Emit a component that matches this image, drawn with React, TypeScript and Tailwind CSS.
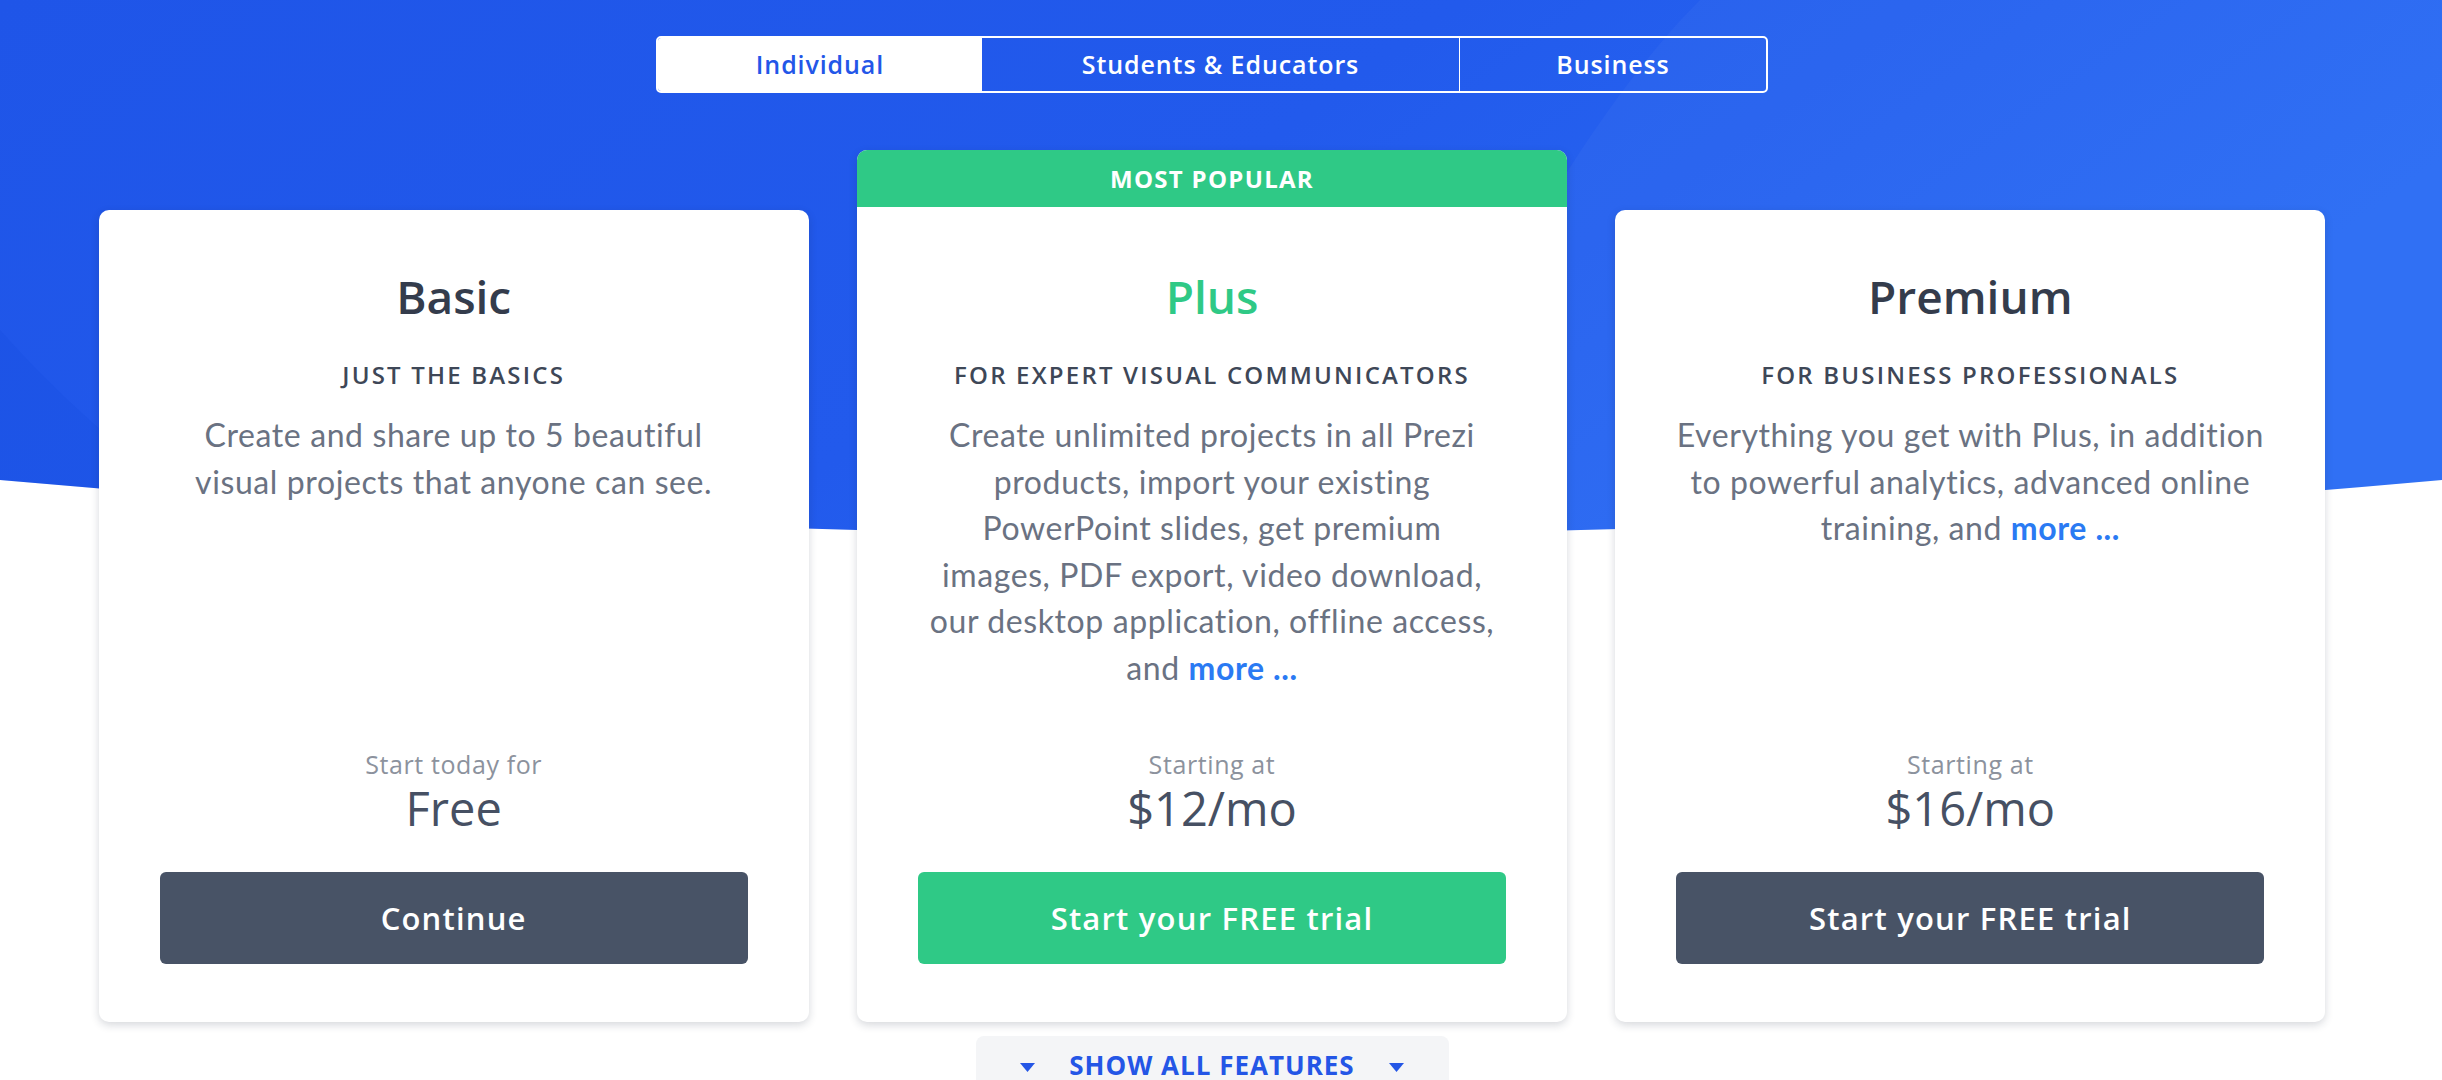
const plans = [
  {
    id: "basic",
    name: "Basic",
    tagline: "JUST THE BASICS",
    lines: ["Create and share up to 5 beautiful", "visual projects that anyone can see."],
    more: false,
    lead: "Start today for",
    price: "Free",
    cta: "Continue",
    popular: false,
  },
  {
    id: "plus",
    name: "Plus",
    tagline: "FOR EXPERT VISUAL COMMUNICATORS",
    lines: [
      "Create unlimited projects in all Prezi",
      "products, import your existing",
      "PowerPoint slides, get premium",
      "images, PDF export, video download,",
      "our desktop application, offline access,",
      "and ",
    ],
    more: true,
    lead: "Starting at",
    price: "$12/mo",
    cta: "Start your FREE trial",
    popular: true,
  },
  {
    id: "premium",
    name: "Premium",
    tagline: "FOR BUSINESS PROFESSIONALS",
    lines: [
      "Everything you get with Plus, in addition",
      "to powerful analytics, advanced online",
      "training, and ",
    ],
    more: true,
    lead: "Starting at",
    price: "$16/mo",
    cta: "Start your FREE trial",
    popular: false,
  },
];

function BlueBackdrop() {
  return (
    <svg
      className="absolute left-0 top-0 w-full h-[560px]"
      viewBox="0 0 2442 560"
      preserveAspectRatio="none"
    >
      <defs>
        <linearGradient id="bg" x1="0" y1="0" x2="1" y2="0.3">
          <stop offset="0" stopColor="#1f55e8" />
          <stop offset="0.55" stopColor="#225aec" />
          <stop offset="1" stopColor="#2a6cf4" />
        </linearGradient>
        <clipPath id="shape">
          <path d="M0 0 H2442 V480 Q1221 590 0 480 Z" />
        </clipPath>
      </defs>
      <path d="M0 0 H2442 V480 Q1221 590 0 480 Z" fill="url(#bg)" />
      <g clipPath="url(#shape)">
        <path d="M1700 0 C1580 120 1470 330 1360 560 L2442 560 L2442 0 Z" fill="#ffffff" opacity="0.03" />
        <path d="M0 330 C80 420 160 480 260 560 L0 560 Z" fill="#0b3fd6" opacity="0.12" />
      </g>
    </svg>
  );
}

function Tabs() {
  return (
    <div className="flex mx-auto w-[1112px] h-[57px] border-2 border-white rounded-[5px] overflow-hidden text-[25px] font-semibold tracking-[0.9px]">
      <div className="w-[324px] bg-white text-[#2356e8] flex items-center justify-center">Individual</div>
      <div className="w-[478px] text-white flex items-center justify-center border-r border-white">
        Students &amp; Educators
      </div>
      <div className="flex-1 text-white flex items-center justify-center">Business</div>
    </div>
  );
}

function PlanCard({ plan }: { plan: (typeof plans)[number] }) {
  return (
    <div
      className={`flex flex-col rounded-[10px] bg-white shadow-[0_3px_8px_rgba(30,40,60,0.18)] overflow-hidden ${
        plan.popular ? "h-[872px]" : "h-[812px]"
      }`}
    >
      {plan.popular && (
        <div className="h-[57px] shrink-0 bg-[#2fc986] text-white flex items-center justify-center text-[24px] font-bold tracking-[1.3px]">
          MOST POPULAR
        </div>
      )}
      <div
        className={`flex flex-col flex-1 items-center text-center px-[61px] pb-[58px] ${
          plan.popular ? "pt-[61px]" : "pt-[58px]"
        }`}
      >
        <h2
          className={`text-[46px] leading-[56px] font-semibold ${
            plan.popular ? "text-[#2fc986]" : "text-[#343c4c]"
          }`}
        >
          {plan.name}
        </h2>
        <div className="mt-[36px] text-[24px] leading-[30px] font-semibold tracking-[2.2px] text-[#3e4757]">
          {plan.tagline}
        </div>
        <div className="mt-[22px] flex-1 font-['Lato',sans-serif] text-[32px] leading-[46.5px] tracking-[0.6px] text-[#6a7282] whitespace-nowrap">
          {plan.lines.map((line, i) => (
            <div key={i}>
              {line}
              {plan.more && i === plan.lines.length - 1 && (
                <span className="font-bold text-[#2a7af3]">more ...</span>
              )}
            </div>
          ))}
        </div>
        <div className="text-[25px] leading-[28px] tracking-[0.6px] text-[#8c929d]">{plan.lead}</div>
        <div className="text-[47px] leading-[50px] text-[#465063] mt-[5px]">{plan.price}</div>
        <button
          className={`mt-[39px] w-full h-[92px] shrink-0 rounded-[6px] text-white text-[31px] font-semibold tracking-[1.2px] ${
            plan.popular ? "bg-[#2fc986]" : "bg-[#485366]"
          }`}
        >
          {plan.cta}
        </button>
      </div>
    </div>
  );
}

export default function App() {
  return (
    <div className="relative w-full h-[1080px] overflow-hidden bg-white font-['Open_Sans',sans-serif]">
      <BlueBackdrop />
      <div className="relative w-[2424px] pt-[36px]">
        <Tabs />
        <div className="mx-auto mt-[57px] w-[2227px] grid grid-cols-3 gap-[48px] items-end">
          {plans.map((p) => (
            <PlanCard key={p.id} plan={p} />
          ))}
        </div>
        <div className="mx-auto mt-[14px] w-[473px] h-[60px] rounded-t-[8px] bg-[#f4f5f7] flex items-start justify-center pt-[14px] gap-[34px] text-[#2456e6]">
          <svg width="15" height="9" viewBox="0 0 15 9" className="mt-[13px]">
            <path d="M0 0 H15 L7.5 9 Z" fill="currentColor" />
          </svg>
          <span className="text-[26px] leading-[30px] font-bold tracking-[1px]">SHOW ALL FEATURES</span>
          <svg width="15" height="9" viewBox="0 0 15 9" className="mt-[13px]">
            <path d="M0 0 H15 L7.5 9 Z" fill="currentColor" />
          </svg>
        </div>
      </div>
    </div>
  );
}
